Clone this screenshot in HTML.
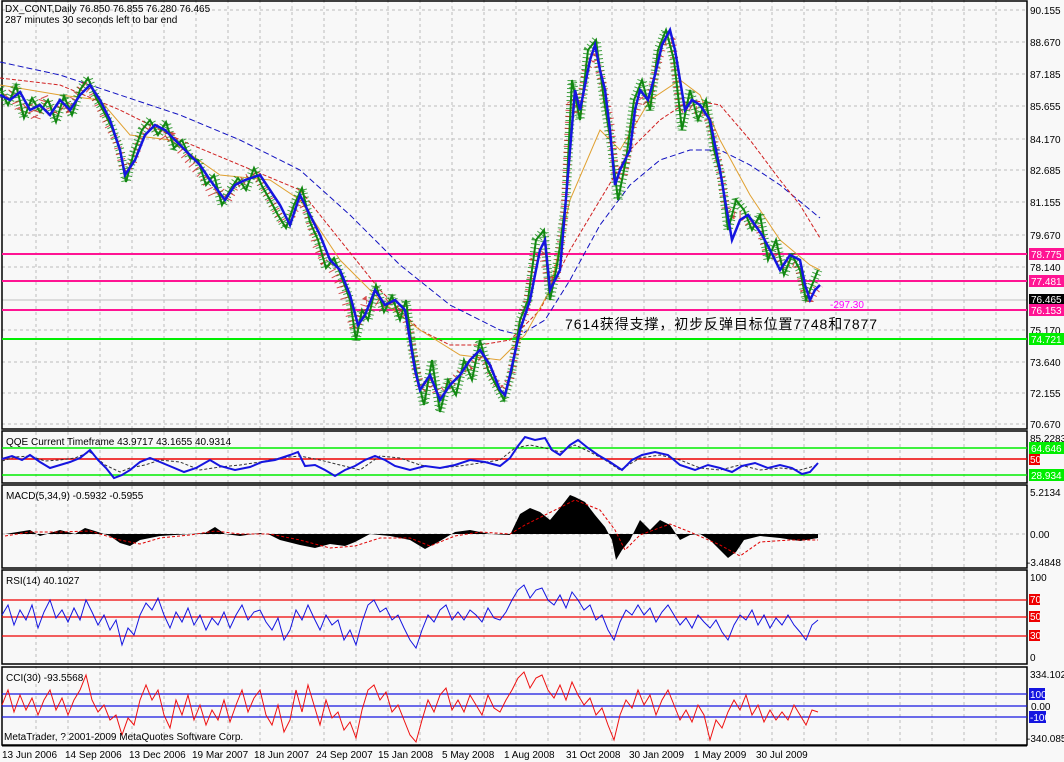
<!DOCTYPE html>
<html><head><meta charset="utf-8"><style>
body{margin:0;background:#f8f8f8;width:1064px;height:762px;overflow:hidden;font-family:"Liberation Sans","Noto Sans CJK SC",sans-serif}
svg{display:block}
text{font-family:"Liberation Sans","Noto Sans CJK SC",sans-serif;font-size:10px;fill:#000}
</style></head><body>
<svg width="1064" height="762" viewBox="0 0 1064 762">
<rect width="1064" height="762" fill="#f8f8f8"/>
<g stroke="#bdbdbd" stroke-dasharray="3,3" stroke-width="1">
<path d="M36 0V745M68 0V745M100 0V745M132 0V745M164 0V745M196 0V745M228 0V745M260 0V745M292 0V745M324 0V745M356 0V745M388 0V745M420 0V745M452 0V745M484 0V745M516 0V745M548 0V745M580 0V745M612 0V745M644 0V745M676 0V745M708 0V745M740 0V745M772 0V745M804 0V745M836 0V745M868 0V745M900 0V745M932 0V745M964 0V745M996 0V745"/>
<path d="M2 10H1027M2 42H1027M2 74H1027M2 106H1027M2 139H1027M2 170H1027M2 202H1027M2 235H1027M2 267H1027M2 330H1027M2 362H1027M2 393H1027M2 424H1027M2 534H1027"/>
</g>
<line x1="2" y1="300" x2="1027" y2="300" stroke="#c0c0c0"/>
<g fill="none" stroke="#000" stroke-width="1.5">
<rect x="2" y="1" width="1025" height="428"/>
<rect x="2" y="431" width="1025" height="52"/>
<rect x="2" y="485" width="1025" height="83"/>
<rect x="2" y="570" width="1025" height="94"/>
<rect x="2" y="667" width="1025" height="78"/>
</g>
<g stroke-width="2">
<line x1="2" y1="254" x2="1027" y2="254" stroke="#ff1493"/>
<line x1="2" y1="281" x2="1027" y2="281" stroke="#ff1493"/>
<line x1="2" y1="310" x2="1027" y2="310" stroke="#ff1493"/>
<line x1="2" y1="339" x2="1027" y2="339" stroke="#00ee00"/>
</g>
<polyline fill="none" stroke="#1010c0" stroke-dasharray="6,3" points="0,62 60,75 120,95 180,115 240,140 300,170 350,215 400,265 450,305 500,330 520,335 545,320 570,280 600,225 630,185 660,160 690,150 720,150 750,165 780,185 820,218"/>
<polyline fill="none" stroke="#d02020" stroke-dasharray="4,2" points="0,78 60,85 120,110 180,140 240,165 300,190 340,240 380,290 420,330 450,345 480,345 510,340 540,310 570,250 600,200 630,150 660,120 690,100 720,105 750,140 780,180 800,205 820,238"/>
<polyline fill="none" stroke="#e0a030" stroke-width="1" points="0,85 60,95 100,100 130,135 170,140 220,175 270,180 300,200 340,260 380,300 420,330 460,355 500,360 525,335 550,290 570,200 600,130 620,150 650,100 680,80 700,95 720,140 750,195 780,240 810,265 820,270"/>
<g stroke-linejoin="bevel" fill="none">
<polyline stroke="#118811" stroke-width="9" stroke-dasharray="1,3" opacity="0.8" points="0,88 8,105 16,85 24,118 32,98 40,112 48,100 56,122 64,96 72,115 80,90 88,78 96,98 104,112 112,128 120,150 126,182 134,152 142,130 150,120 158,135 166,122 174,148 182,140 190,158 198,160 206,185 214,175 222,205 230,190 238,178 246,190 254,168 262,186 270,200 278,215 286,228 294,205 302,188 310,222 318,240 326,268 334,258 342,278 350,300 356,340 362,310 368,320 376,285 384,312 392,296 400,320 406,300 412,348 418,380 424,405 432,360 440,412 448,380 456,395 464,360 472,380 480,340 488,370 496,385 504,400 512,370 520,320 528,300 536,240 544,230 550,300 558,260 566,200 572,80 580,120 588,50 596,40 604,100 612,150 618,200 626,160 634,100 642,80 650,110 658,50 666,30 674,60 682,130 690,90 698,120 706,100 714,150 722,180 728,230 736,200 744,210 752,230 760,215 768,260 776,240 784,275 792,255 800,270 806,300 812,285 818,270"/>
<polyline stroke="#cc2020" stroke-width="8" stroke-dasharray="1,5" stroke-dashoffset="2" opacity="0.8" points="4,100 12,92 20,112 28,104 36,120 44,96 52,115 60,105 68,110 76,95 84,85 92,92 100,108 108,125 116,140 124,170 132,165 140,140 148,125 156,128 164,140 172,135 180,150 188,160 196,170 204,178 212,195 220,190 228,200 236,185 244,180 252,175 260,180 268,195 276,210 284,225 292,215 300,200 308,215 316,245 324,262 332,270 340,285 348,310 354,330 360,320 366,300 374,300 382,305 390,300 398,310 404,315 410,330 416,370 422,390 430,380 438,395 446,388 454,380 462,370 470,366 478,355 486,362 494,380 502,390 510,380 518,335 526,310 534,260 542,250 548,280 556,280 564,220 570,100 578,115 586,70 594,55 602,80 610,120 616,180 624,175 632,130 640,95 648,105 656,70 664,40 672,40 680,110 688,105 696,110 704,110 712,130 720,170 726,210 734,215 742,215 750,225 758,225 766,250 774,255 782,265 790,262 798,265 804,290 810,300 816,290 820,285"/>
</g>
<polyline fill="none" stroke="#118811" stroke-width="2" points="0,88 8,105 16,85 24,118 32,98 40,112 48,100 56,122 64,96 72,115 80,90 88,78 96,98 104,112 112,128 120,150 126,182 134,152 142,130 150,120 158,135 166,122 174,148 182,140 190,158 198,160 206,185 214,175 222,205 230,190 238,178 246,190 254,168 262,186 270,200 278,215 286,228 294,205 302,188 310,222 318,240 326,268 334,258 342,278 350,300 356,340 362,310 368,320 376,285 384,312 392,296 400,320 406,300 412,348 418,380 424,405 432,360 440,412 448,380 456,395 464,360 472,380 480,340 488,370 496,385 504,400 512,370 520,320 528,300 536,240 544,230 550,300 558,260 566,200 572,80 580,120 588,50 596,40 604,100 612,150 618,200 626,160 634,100 642,80 650,110 658,50 666,30 674,60 682,130 690,90 698,120 706,100 714,150 722,180 728,230 736,200 744,210 752,230 760,215 768,260 776,240 784,275 792,255 800,270 806,300 812,285 818,270"/>
<polyline fill="none" stroke="#1515e0" stroke-width="2.5" points="0,95 10,100 20,92 30,110 40,105 50,115 60,100 70,110 80,95 90,85 100,100 110,120 120,150 125,175 135,160 145,135 155,125 165,130 175,140 185,150 200,165 210,180 225,200 235,185 245,180 260,175 270,190 280,205 290,225 300,195 310,215 320,235 330,260 340,270 350,295 358,325 365,315 375,290 385,305 395,300 405,310 410,340 415,370 420,390 430,375 440,400 450,385 460,375 470,360 480,350 490,365 500,390 505,395 510,375 520,330 530,300 540,250 545,240 550,290 560,270 565,210 575,90 580,110 590,60 595,45 600,70 605,90 610,130 615,185 620,170 630,150 635,110 640,90 648,100 655,75 662,45 670,30 675,50 685,110 692,100 700,105 710,120 715,145 720,170 725,200 732,240 740,220 748,215 755,225 762,235 770,250 780,270 790,255 800,260 805,285 810,300 815,290 820,285"/>
<g stroke-width="1.5"><line x1="2" y1="448" x2="1027" y2="448" stroke="#00ee00"/><line x1="2" y1="459" x2="1027" y2="459" stroke="#ee0000"/><line x1="2" y1="475" x2="1027" y2="475" stroke="#00ee00"/></g>
<polyline fill="none" stroke="#333" stroke-dasharray="3,2" points="2,461 15,457 30,456 45,461 60,460 75,458 90,452 105,465 120,472 130,468 145,465 160,460 180,462 200,470 220,467 240,465 260,462 280,458 300,456 320,460 340,465 360,470 380,456 400,458 420,465 440,468 460,466 480,463 500,460 515,448 530,445 545,448 560,452 575,445 590,452 605,460 620,470 640,458 660,455 680,460 700,468 720,470 740,465 760,470 780,468 800,470 818,465"/>
<polyline fill="none" stroke="#1515e0" stroke-width="2" points="2,459 12,456 22,460 30,455 40,462 50,468 60,465 70,462 80,458 90,450 98,460 106,468 114,478 122,475 130,470 140,462 150,458 160,462 172,467 184,472 196,468 210,460 220,466 235,470 250,467 262,462 275,460 290,455 298,452 305,466 315,465 325,470 335,476 345,470 355,466 365,460 375,456 385,460 395,466 410,470 425,466 440,468 455,465 470,460 485,462 500,466 510,458 518,446 525,437 535,440 545,438 552,450 560,455 570,445 578,440 588,448 598,455 610,462 622,470 632,460 642,455 655,452 668,455 680,465 695,470 708,465 720,468 732,472 742,466 755,463 768,468 780,465 792,468 802,474 810,472 818,463"/>
<path d="M5,534 L30,530 40,536 50,533 60,530 75,534 85,528 95,531 110,536 120,543 130,546 140,540 160,536 190,534 205,533 215,527 225,534 240,536 260,533 270,535 280,540 300,545 315,548 330,544 345,546 355,542 370,534 390,536 410,540 425,549 440,541 455,532 470,530 490,534 510,535 520,514 530,508 540,512 550,520 560,508 570,495 575,497 585,502 595,515 605,527 612,540 616,560 622,550 630,540 640,520 650,530 660,520 670,525 680,540 690,535 700,534 710,540 720,550 728,558 736,552 744,540 760,536 780,538 800,541 818,538 L818,534 Z" fill="#000"/>
<polyline fill="none" stroke="#e00000" stroke-dasharray="3,2" points="5,536 30,532 60,532 90,531 120,540 140,544 160,538 190,535 215,531 240,534 270,534 300,540 330,548 355,546 380,538 410,538 430,546 455,536 480,532 510,534 525,525 545,515 575,500 600,510 615,530 625,550 640,535 670,524 690,532 720,545 740,556 760,542 790,540 818,540"/>
<g stroke-width="1.2" stroke="#ee0000"><line x1="2" y1="600" x2="1027" y2="600"/><line x1="2" y1="617" x2="1027" y2="617"/><line x1="2" y1="636" x2="1027" y2="636"/></g>
<polyline fill="none" stroke="#1515e0" stroke-width="1" points="2,615 8,605 14,625 20,610 26,620 32,605 38,628 44,612 50,600 56,618 62,610 68,622 74,608 80,620 86,600 92,612 98,625 104,615 110,630 116,620 122,645 128,628 134,635 140,615 146,603 152,610 158,598 164,615 170,628 176,612 182,622 188,608 194,625 200,615 206,630 212,618 218,625 224,612 230,628 236,615 242,605 248,620 254,612 260,610 266,622 272,630 278,618 284,640 290,630 296,610 302,620 308,605 314,618 320,630 326,615 332,625 338,620 344,640 350,630 356,645 362,622 368,605 374,600 380,612 386,608 392,620 398,615 404,628 410,640 416,648 422,630 428,615 434,622 440,610 446,605 452,620 458,612 464,620 470,610 476,615 482,622 488,608 494,618 500,620 506,612 512,600 518,590 524,585 530,598 536,590 542,588 548,600 554,605 560,595 566,608 572,592 578,600 584,610 590,605 596,620 602,615 608,630 614,640 620,622 626,610 632,615 638,605 644,615 650,608 656,622 662,612 668,605 674,615 680,625 686,618 692,628 698,615 704,622 710,628 716,620 722,632 728,640 734,625 740,615 746,620 752,610 758,625 764,615 770,628 776,618 782,625 788,615 794,625 800,632 806,640 812,625 818,620"/>
<g stroke-width="1.2" stroke="#1515e0"><line x1="2" y1="694" x2="1027" y2="694"/><line x1="2" y1="706" x2="1027" y2="706"/><line x1="2" y1="717" x2="1027" y2="717"/></g>
<polyline fill="none" stroke="#ee1010" stroke-width="1" points="2,705 8,690 14,712 20,695 26,710 32,698 38,715 44,700 50,690 56,710 62,698 68,715 74,700 80,690 86,675 92,700 98,712 104,705 110,720 116,715 122,735 128,718 134,725 140,700 146,685 152,700 158,690 164,715 170,728 176,700 182,715 188,695 194,720 200,705 206,725 212,710 218,720 224,700 230,722 236,705 242,690 248,712 254,698 260,690 266,715 272,725 278,705 284,732 290,720 296,690 302,712 308,685 314,705 320,725 326,700 332,718 338,712 344,730 350,722 356,738 362,710 368,690 374,685 380,700 386,692 392,712 398,705 404,720 410,735 416,742 422,720 428,700 434,712 440,695 446,688 452,710 458,700 464,712 470,695 476,705 482,715 488,695 494,708 500,712 506,700 512,690 518,678 524,672 530,688 536,678 542,675 548,690 554,698 560,685 566,700 572,682 578,695 584,705 590,698 596,715 602,708 608,725 614,740 620,715 626,700 632,708 638,690 644,705 650,695 656,715 662,700 668,690 674,705 680,720 686,710 692,722 698,705 704,715 710,740 716,720 722,728 728,712 734,700 740,710 746,695 752,715 758,705 764,722 770,710 776,720 782,712 788,720 794,705 800,715 806,725 812,710 818,712"/>
<text x="5" y="12">DX_CONT,Daily  76.850 76.855 76.280 76.465</text>
<text x="5" y="23">287 minutes 30 seconds left to bar end</text>
<text x="6" y="445">QQE Current Timeframe 43.9717 43.1655 40.9314</text>
<text x="6" y="499">MACD(5,34,9) -0.5932 -0.5955</text>
<text x="6" y="584">RSI(14) 40.1027</text>
<text x="6" y="681">CCI(30) -93.5568</text>
<text x="4" y="740">MetaTrader, ? 2001-2009 MetaQuotes Software Corp.</text>
<text x="565" y="329" textLength="312" lengthAdjust="spacing" style="font-size:14px">7614获得支撑，初步反弹目标位置7748和7877</text>
<text x="830" y="308" style="fill:#ff00ff;font-size:10px">-297.30</text>
<g>
<text x="1030" y="14">90.155</text><text x="1030" y="46">88.670</text><text x="1030" y="78">87.185</text><text x="1030" y="110">85.655</text><text x="1030" y="143">84.170</text><text x="1030" y="174">82.685</text><text x="1030" y="206">81.155</text><text x="1030" y="239">79.670</text><text x="1030" y="271">78.140</text><text x="1030" y="334">75.170</text><text x="1030" y="366">73.640</text><text x="1030" y="397">72.155</text><text x="1030" y="428">70.670</text>
<rect x="1029" y="248" width="35" height="12" fill="#ff1493"/><text x="1031" y="258" style="fill:#fff">78.775</text>
<rect x="1029" y="275" width="35" height="12" fill="#ff1493"/><text x="1031" y="285" style="fill:#fff">77.481</text>
<rect x="1029" y="294" width="35" height="10" fill="#000"/><text x="1031" y="303" style="fill:#fff">76.465</text>
<rect x="1029" y="304" width="35" height="12" fill="#ff1493"/><text x="1031" y="314" style="fill:#fff">76.153</text>
<rect x="1029" y="333" width="35" height="12" fill="#00ee00"/><text x="1031" y="343" style="fill:#fff">74.721</text>
<text x="1030" y="442">85.2283</text>
<rect x="1029" y="442" width="35" height="12" fill="#00ee00"/><text x="1031" y="452" style="fill:#fff">64.646</text>
<rect x="1029" y="454" width="11" height="11" fill="#ee0000"/><text x="1030" y="463" style="fill:#fff">50</text>
<rect x="1029" y="469" width="35" height="12" fill="#00ee00"/><text x="1031" y="479" style="fill:#fff">28.934</text>
<text x="1030" y="496">5.2134</text><text x="1030" y="538">0.00</text><text x="1027" y="566">-3.4848</text>
<text x="1030" y="581">100</text>
<rect x="1029" y="594" width="11" height="11" fill="#ee0000"/><text x="1030" y="603" style="fill:#fff">70</text>
<rect x="1029" y="611" width="11" height="11" fill="#ee0000"/><text x="1030" y="620" style="fill:#fff">50</text>
<rect x="1029" y="630" width="11" height="11" fill="#ee0000"/><text x="1030" y="639" style="fill:#fff">30</text>
<text x="1030" y="661">0</text>
<text x="1030" y="678">334.102</text>
<rect x="1029" y="688" width="16" height="12" fill="#1515e0"/><text x="1030" y="698" style="fill:#fff">100</text>
<text x="1031" y="710">0.00</text>
<rect x="1029" y="711" width="17" height="12" fill="#1515e0"/><text x="1030" y="721" style="fill:#fff">-100</text>
<text x="1027" y="742">-340.085</text>
</g>
<g>
<line x1="2" y1="746" x2="1027" y2="746" stroke="#000"/>
<text x="2" y="758">13 Jun 2006</text><text x="65" y="758">14 Sep 2006</text><text x="129" y="758">13 Dec 2006</text><text x="192" y="758">19 Mar 2007</text><text x="254" y="758">18 Jun 2007</text><text x="316" y="758">24 Sep 2007</text><text x="378" y="758">15 Jan 2008</text><text x="442" y="758">5 May 2008</text><text x="504" y="758">1 Aug 2008</text><text x="566" y="758">31 Oct 2008</text><text x="629" y="758">30 Jan 2009</text><text x="694" y="758">1 May 2009</text><text x="756" y="758">30 Jul 2009</text>
</g>
</svg>
</body></html>
